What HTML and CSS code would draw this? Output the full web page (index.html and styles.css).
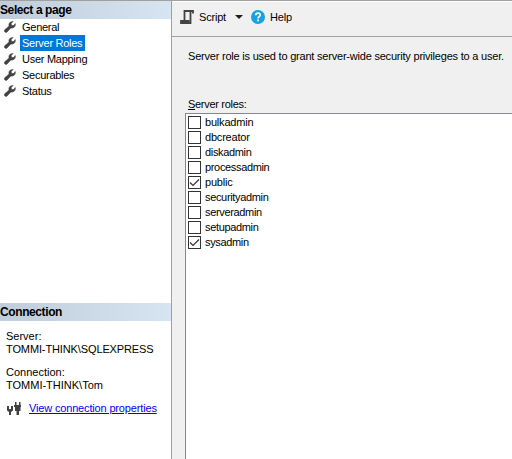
FILE: index.html
```html
<!DOCTYPE html>
<html lang="en">
<head>
<meta charset="utf-8">
<title>Login Properties</title>
<link rel="stylesheet" href="styles.css">
</head>
<body>
<svg class="defs" aria-hidden="true">
  <symbol id="wrench" viewBox="0 0 12 12"><path d="M11.4 2.5 9.3 4.6 7.6 4.200 7.200 2.600 9.200.5C7 0 4.800 1.600 4.800 3.800q0 .6.2 1.1L.9 8.600c-1.700 1.600.6 4 2.300 2.400L7 7c2.600.8 5-1.800 4.400-4.500Z" fill="#424242" stroke="#424242" stroke-width=".4"/></symbol>
</svg>
<div class="window">
  <aside class="side">
    <h2 class="heading">Select a page</h2>
    <nav class="pages">
      <div class="page"><svg class="wrench"><use href="#wrench"/></svg><span>General</span></div>
      <div class="page"><svg class="wrench"><use href="#wrench"/></svg><span class="selected">Server Roles</span></div>
      <div class="page"><svg class="wrench"><use href="#wrench"/></svg><span>User Mapping</span></div>
      <div class="page"><svg class="wrench"><use href="#wrench"/></svg><span>Securables</span></div>
      <div class="page"><svg class="wrench"><use href="#wrench"/></svg><span>Status</span></div>
    </nav>
    <h2 class="heading">Connection</h2>
    <div class="info">
      <p>Server:<br><span class="host">TOMMI-THINK\SQLEXPRESS</span></p>
      <p>Connection:<br><span>TOMMI-THINK\Tom</span></p>
      <div class="props">
        <svg class="plug" viewBox="0 0 14 14"><g fill="#424242"><path d="M0 4h2v3h2V4h2v4.500L4 10v3H2v-3L0 8.500Z"/><path d="M8 0h1.500v3H12V0h1.500v3H14v2h-.500v4H12v4H9.500V9H8V5H7V3h1Z"/></g></svg>
        <a href="#">View connection properties</a>
      </div>
    </div>
  </aside>
  <main class="main">
    <div class="toolbar">
      <svg class="scroll" viewBox="0 0 14 14"><path d="M13 3.500V1H4.500V10M10.500 1V13H1V11h7.500v2" fill="none" stroke="#424242" stroke-width="1.800"/></svg>
      <span class="script">Script</span>
      <svg class="arrow" viewBox="0 0 8 4"><path d="M0 0h8L4 4Z" fill="#1e1e1e"/></svg>
      <svg class="help-icon" viewBox="0 0 14 14"><circle cx="7" cy="7" r="7" fill="#1ba1e2"/><path d="M4.800 5.200Q4.800 3.200 7 3.200T9.200 5.100Q9.200 6 8.100 6.700T7 8.500" fill="none" stroke="#fff" stroke-width="1.700"/><path d="M6.100 9.600h1.800v1.700H6.100Z" fill="#fff"/></svg>
      <span class="help">Help</span>
    </div>
    <p class="description">Server role is used to grant server-wide security privileges to a user.</p>
    <p class="label"><u>S</u>erver roles:</p>
    <div class="list">
      <div class="role"><i class="box"></i><span class="wide">bulkadmin</span></div>
      <div class="role"><i class="box"></i><span class="wide">dbcreator</span></div>
      <div class="role"><i class="box"></i><span>diskadmin</span></div>
      <div class="role"><i class="box"></i><span>processadmin</span></div>
      <div class="role"><i class="box"><svg viewBox="0 0 11 11"><path d="M1 5.500 4 8.500 10 2.500"/></svg></i><span class="wide">public</span></div>
      <div class="role"><i class="box"></i><span>securityadmin</span></div>
      <div class="role"><i class="box"></i><span>serveradmin</span></div>
      <div class="role"><i class="box"></i><span>setupadmin</span></div>
      <div class="role"><i class="box"><svg viewBox="0 0 11 11"><path d="M1 5.500 4 8.500 10 2.500"/></svg></i><span>sysadmin</span></div>
    </div>
  </main>
</div>
</body>
</html>
```
FILE: styles.css
```css
* { box-sizing: border-box; }
body { margin: 0; font: 11px/13px "Liberation Sans", Arial, sans-serif; color: #000; overflow: hidden; }
p, h2 { margin: 0; }
svg { display: block; flex: none; }
.defs { display: none; }
.window { display: flex; width: 512px; height: 459px; border-top: 1px solid #a0a0a0; background: #f0f0f0; white-space: nowrap; }
.side { width: 172px; flex: none; display: flex; flex-direction: column; background: #fff; border-right: 1px solid #a0a0a0; }
.heading { height: 18px; font-size: 12px; line-height: 18px; font-weight: bold; letter-spacing: -.4px; background: linear-gradient(90deg, #bfcddb, #d7e4f2); }
.pages { height: 284px; }
.page { display: flex; align-items: center; height: 16px; padding-left: 4px; }
.page span { margin-left: 4px; padding: 0 2px; height: 16px; line-height: 16px; letter-spacing: -.27px; }
.page .selected { padding-right: 3px; background: #0078d7; color: #fff; }
.wrench { width: 12px; height: 12px; }
.info { padding: 9px 0 0 6px; }
.info p { margin-bottom: 10px; }
.host { letter-spacing: -.12px; }
.props { display: flex; align-items: center; height: 14px; margin-top: -1px; }
.plug { width: 14px; height: 14px; margin: 1px 8px 0 1px; }
.props a { color: #0000ff; letter-spacing: -.16px; }
.main { flex: 1; min-width: 0; display: flex; flex-direction: column; }
.toolbar { display: flex; align-items: center; height: 36px; padding: 0 0 4px 8px; border-bottom: 1px solid #a0a0a8; border-top: 1px solid #fff; }
.scroll { width: 14px; height: 14px; }
.script { width: 27px; margin-left: 5px; letter-spacing: -.2px; }
.arrow { width: 8px; height: 4px; margin-left: 9px; }
.help-icon { width: 14px; height: 14px; margin: 0 5px 0 8px; }
.help { letter-spacing: -.2px; }
.description { margin: 13px 0 0 16px; letter-spacing: -.21px; }
.label { margin: 35px 0 2px 16px; letter-spacing: -.3px; }
.list { flex: 1; margin-left: 13px; padding: 1px 0 0 2px; background: #fff; border: solid #828790; border-width: 1px 0 0 1px; }
.role { display: flex; align-items: center; height: 15px; letter-spacing: -.34px; }
.wide { letter-spacing: -.2px; }
.box { width: 13px; height: 13px; margin-right: 4px; background: #fff; border: 1px solid #333; }
.box svg { width: 11px; height: 11px; fill: none; stroke: #333; stroke-width: 1.2; }
```
